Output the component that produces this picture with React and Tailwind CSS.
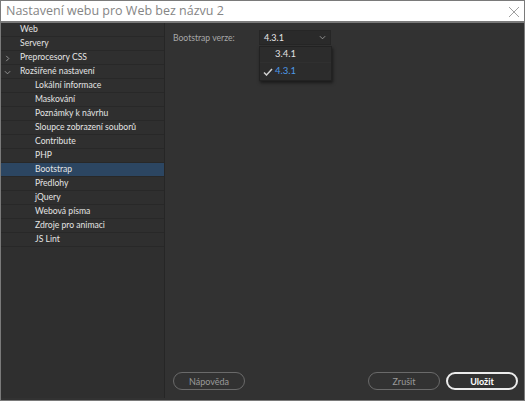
import React from 'react';

const items = [
  { label: 'Web', level: 0 },
  { label: 'Servery', level: 0 },
  { label: 'Preprocesory CSS', level: 0, chevron: 'right' },
  { label: 'Rozšířené nastavení', level: 0, chevron: 'down' },
  { label: 'Lokální informace', level: 1 },
  { label: 'Maskování', level: 1 },
  { label: 'Poznámky k návrhu', level: 1 },
  { label: 'Sloupce zobrazení souborů', level: 1 },
  { label: 'Contribute', level: 1 },
  { label: 'PHP', level: 1 },
  { label: 'Bootstrap', level: 1, selected: true },
  { label: 'Předlohy', level: 1 },
  { label: 'jQuery', level: 1 },
  { label: 'Webová písma', level: 1 },
  { label: 'Zdroje pro animaci', level: 1 },
  { label: 'JS Lint', level: 1 },
];

const Chevron = ({ dir }) => (
  <svg width="7" height="7" viewBox="0 0 8 8" className="absolute left-[3px] top-[4px]">
    {dir === 'right' ? (
      <path d="M2.5 1 L5.5 4 L2.5 7" fill="none" stroke="#a0a0a0" strokeWidth="1" />
    ) : (
      <path d="M1 2.5 L4 5.5 L7 2.5" fill="none" stroke="#a0a0a0" strokeWidth="1" />
    )}
  </svg>
);

const PillButton = ({ children, primary }) => (
  <button
    className={`w-[72px] h-[18px] rounded-full text-[9px] leading-none flex items-center justify-center ${
      primary ? 'border-2 border-[#ececec] text-white font-bold' : 'border border-[#6a6a6a] text-[#9a9a9a]'
    }`}
  >
    {children}
  </button>
);

export default function App() {
  return (
    <div
      className="w-[525px] h-[401px] flex flex-col border border-[#7a7a7a] bg-[#323232] overflow-hidden"
      style={{ fontFamily: 'Lato, "Open Sans", sans-serif' }}
    >
      <div className="h-[22px] bg-white flex items-center justify-between pl-[5px] pr-[4px] border-b-2 border-[#7a7a7a] shrink-0">
        <span
          className="text-[12.5px] text-[#858585]"
          style={{ fontFamily: '"Open Sans", sans-serif' }}
        >
          Nastavení webu pro Web bez názvu 2
        </span>
        <svg width="12" height="12" viewBox="0 0 12 12" className="mt-[2px]">
          <path d="M1 1 L11 11 M11 1 L1 11" stroke="#a0a0a0" strokeWidth="1" />
        </svg>
      </div>
      <div className="flex flex-1 min-h-0">
        <div className="w-[164px] bg-[#2f2f2f] border-r border-[#262626] mb-[2px] shrink-0">
          {items.map((it) => (
            <div
              key={it.label}
              className={`relative h-[14px] border-b border-[#282828] text-[8.6px] leading-[13px] text-[#e4e4e4] whitespace-nowrap ${
                it.selected ? 'bg-[#2c4662]' : ''
              } ${it.level === 0 ? 'pl-[19px]' : 'pl-[34px]'}`}
            >
              {it.chevron && <Chevron dir={it.chevron} />}
              {it.label}
            </div>
          ))}
        </div>
        <div className="flex-1 flex flex-col pl-[8px] pr-[6px] pt-[7px] pb-[10px]">
          <div className="flex items-start">
            <span className="text-[8.6px] text-[#a8a8a8] mt-[2px] w-[86px]">Bootstrap verze:</span>
            <div className="relative">
              <div className="w-[72px] h-[15px] bg-[#2a2a2a] border border-[#262626] flex items-center justify-between pl-[4px] pr-[4px] text-[9px] text-[#e6e6e6]">
                <span>4.3.1</span>
                <svg width="7" height="5" viewBox="0 0 8 5">
                  <path d="M1 1 L4 4 L7 1" fill="none" stroke="#a0a0a0" strokeWidth="1" />
                </svg>
              </div>
              <div className="absolute left-0 top-[16px] w-[73px] bg-[#2c2c2c] border border-[#222] shadow-[1px_2px_3px_rgba(0,0,0,0.5)] text-[9.5px]">
                <div className="h-[16px] flex items-center pl-[15px] text-[#e0e0e0] border-b border-[#303030]">3.4.1</div>
                <div className="h-[17px] flex items-center pl-[3px] text-[#4d9ae8]">
                  <svg width="10" height="8" viewBox="0 0 10 8" className="mr-[2px]">
                    <path d="M1 4.5 L3.5 7 L9 1" fill="none" stroke="#d0d0d0" strokeWidth="1.5" />
                  </svg>
                  <span>4.3.1</span>
                </div>
              </div>
            </div>
          </div>
          <div className="flex-1" />
          <div className="flex items-center">
            <PillButton>Nápověda</PillButton>
            <div className="flex-1" />
            <PillButton>Zrušit</PillButton>
            <div className="w-[6px]" />
            <PillButton primary>Uložit</PillButton>
          </div>
        </div>
      </div>
    </div>
  );
}
